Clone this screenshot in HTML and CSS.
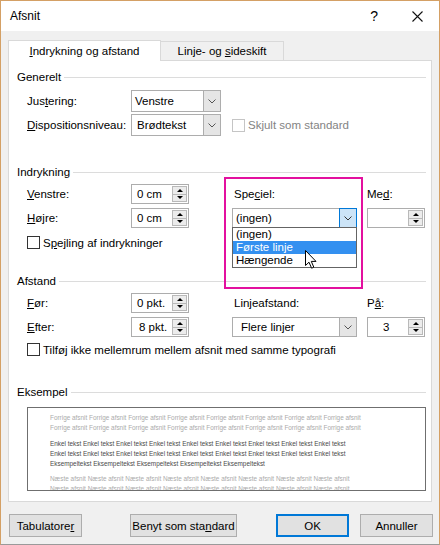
FILE: index.html
```html
<!DOCTYPE html>
<html lang="da">
<head>
<meta charset="UTF-8" />
<meta name="viewport" content="width=device-width, initial-scale=1" />
<title>Afsnit</title>
<link rel="stylesheet" href="styles.css">
</head>
<body>
  <div class="dialog">
    <div class="titlebar">
      <span class="title">Afsnit</span>
      <span class="help">?</span>
      <svg class="close" width="11" height="11" viewBox="0 0 11 11"><path d="M0.5 0.5 L10.5 10.5 M10.5 0.5 L0.5 10.5" stroke="#111" stroke-width="1.1" fill="none"/></svg>
    </div>

    <div class="tabs">
      <div class="tab active"><span><u>I</u>ndrykning og afstand</span></div>
      <div class="tab"><span>Linje- og <u>s</u>ideskift</span></div>
    </div>

    <div class="panel">
      <!-- Generelt -->
      <div class="group-title first">Generelt</div>
      <div class="grid general">
        <label>Jus<u>t</u>ering:</label>
        <div class="select wide"><span class="val">Venstre</span><span class="arrow"><svg width="8" height="5" viewBox="0 0 8 5"><path d="M0.5 0.5 L4 4 L7.5 0.5" stroke="#555" fill="none"/></svg></span></div>
        <div></div><div></div>
        <label><u>D</u>ispositionsniveau:</label>
        <div class="select wide"><span class="val pad5">Brødtekst</span><span class="arrow"><svg width="8" height="5" viewBox="0 0 8 5"><path d="M0.5 0.5 L4 4 L7.5 0.5" stroke="#555" fill="none"/></svg></span></div>
        <div class="check-row span2 disabled"><span class="box"></span><span>Skjult som standard</span></div>
      </div>

      <!-- Indrykning -->
      <div class="group-title gap-indent">Indrykning</div>
      <div class="grid rows indent">
        <label><u>V</u>enstre:</label>
        <div class="spin"><span class="val">0 cm</span><span class="spin-btns"><i class="up"></i><i class="down"></i></span></div>
        <label class="col-label">Spe<u>c</u>iel:</label>
        <label>Me<u>d</u>:</label>

        <label><u>H</u>øjre:</label>
        <div class="spin"><span class="val">0 cm</span><span class="spin-btns"><i class="up"></i><i class="down"></i></span></div>
        <div class="select open">
          <span class="val">(ingen)</span>
          <span class="arrow"><svg width="8" height="5" viewBox="0 0 8 5"><path d="M0.5 0.5 L4 4 L7.5 0.5" stroke="#333" fill="none"/></svg></span>
          <ul class="droplist">
            <li>(ingen)</li>
            <li class="hi">Første linje</li>
            <li>Hængende</li>
          </ul>
          <svg class="cursor" width="12" height="19" viewBox="0 0 12 19"><path d="M0.5 0.5 L0.5 15.5 L4 12.2 L6.6 18.2 L8.8 17.2 L6.3 11.4 L11 11.4 Z" fill="#fff" stroke="#000" stroke-width="1" stroke-linejoin="round"/></svg>
        </div>
        <div class="spin"><span class="val"></span><span class="spin-btns"><i class="up"></i><i class="down"></i></span></div>

        <div class="marker"></div>
      </div>
      <div class="check-row spaced-8"><span class="box"></span><span>S<u>p</u>ejling af indrykninger</span></div>

      <!-- Afstand -->
      <div class="group-title gap-space">Afstand</div>
      <div class="grid rows">
        <label><u>F</u>ør:</label>
        <div class="spin"><span class="val">0 pkt.</span><span class="spin-btns"><i class="up"></i><i class="down"></i></span></div>
        <label class="col-label">Lin<u>j</u>eafstand:</label>
        <label>P<u>å</u>:</label>

        <label><u>E</u>fter:</label>
        <div class="spin"><span class="val pad7">8 pkt.</span><span class="spin-btns"><i class="up"></i><i class="down"></i></span></div>
        <div class="select"><span class="val pad8">Flere linjer</span><span class="arrow"><svg width="8" height="5" viewBox="0 0 8 5"><path d="M0.5 0.5 L4 4 L7.5 0.5" stroke="#555" fill="none"/></svg></span></div>
        <div class="spin"><span class="val pad15">3</span><span class="spin-btns"><i class="up"></i><i class="down"></i></span></div>
      </div>
      <div class="check-row spaced-6"><span class="box"></span><span>Tilføj ikke mellemrum mellem afsnit med samme typografi</span></div>

      <!-- Eksempel -->
      <div class="group-title gap-sample">Eksempel</div>
      <div class="preview">
        <div class="pv prev">Forrige afsnit Forrige afsnit Forrige afsnit Forrige afsnit Forrige afsnit Forrige afsnit Forrige afsnit Forrige afsnit</div>
        <div class="pv prev">Forrige afsnit Forrige afsnit Forrige afsnit Forrige afsnit Forrige afsnit Forrige afsnit Forrige afsnit Forrige afsnit</div>
        <div class="pv cur first-cur">Enkel tekst Enkel tekst Enkel tekst Enkel tekst Enkel tekst Enkel tekst Enkel tekst Enkel tekst Enkel tekst</div>
        <div class="pv cur">Enkel tekst Enkel tekst Enkel tekst Enkel tekst Enkel tekst Enkel tekst Enkel tekst Enkel tekst Enkel tekst</div>
        <div class="pv cur">Eksempeltekst Eksempeltekst Eksempeltekst Eksempeltekst Eksempeltekst</div>
        <div class="pv prev first-next">Næste afsnit Næste afsnit Næste afsnit Næste afsnit Næste afsnit Næste afsnit Næste afsnit Næste afsnit</div>
        <div class="pv prev">Næste afsnit Næste afsnit Næste afsnit Næste afsnit Næste afsnit Næste afsnit Næste afsnit Næste afsnit</div>
      </div>
    </div>

    <div class="buttons">
      <button class="btn tabs-btn">Tabulatore<u>r</u></button>
      <button class="btn default-btn">Benyt som sta<u>n</u>dard</button>
      <button class="btn ok-btn">OK</button>
      <button class="btn cancel-btn">Annuller</button>
    </div>
  </div>
</body>
</html>
```

FILE: styles.css
```css
* {
  box-sizing: border-box;
}
body {
  margin: 0;
  font-family: "Liberation Sans", Arial, sans-serif;
  font-size: 11.5px;
  color: #000;
}
u {
  text-decoration: underline;
  text-underline-offset: 1px;
}
.dialog {
  width: 440px;
  height: 545px;
  border: 1px solid #d4a065;
  border-bottom-color: #9a9a9a;
  background: #f0f0f0;
  display: flex;
  flex-direction: column;
}
.titlebar {
  height: 30px;
  flex: none;
  background: #fff;
  display: flex;
  align-items: center;
  padding-left: 9px;
}
.title {
  flex: 1;
  font-size: 12px;
}
.help {
  font-size: 14px;
  margin-right: 34px;
}
.close {
  margin-right: 16px;
}

/* tabs */
.tabs {
  flex: none;
  display: flex;
  align-items: flex-end;
  height: 21px;
  margin-top: 9px;
  margin-bottom: -1px;
  padding-left: 7px;
  position: relative;
  z-index: 1;
}
.tab {
  width: 123px;
  height: 19px;
  margin-bottom: 1px;
  border: 1px solid #d9d9d9;
  border-left: none;
  border-bottom: none;
  display: flex;
  align-items: center;
  justify-content: center;
}
.tab.active {
  width: 153px;
  height: 21px;
  margin-bottom: 0;
  background: #fff;
  border-left: 1px solid #d9d9d9;
}

/* tab page */
.panel {
  flex: none;
  height: 442px;
  margin: 0 7px;
  background: #fff;
  border: 1px solid #d9d9d9;
}
.group-title {
  display: flex;
  align-items: center;
  height: 16px;
  padding-left: 8px;
  margin-right: 5px;
}
.group-title::after {
  content: "";
  flex: 1;
  height: 1px;
  margin-left: 3px;
  background: #dcdcdc;
}
.group-title.first { margin-top: 8px; }
.group-title.gap-indent { margin-top: 28px; }
.group-title.gap-space { margin-top: 24px; }
.group-title.gap-sample { margin-top: 28px; }

.grid {
  display: grid;
  grid-template-columns: 104px 101px 135px 58px;
  align-items: center;
  padding-left: 18px;
  margin-top: 4px;
  position: relative;
}
.grid.general {
  grid-auto-rows: 22px;
  row-gap: 2px;
  margin-top: 5px;
}
.grid.rows {
  grid-auto-rows: 20px;
  row-gap: 4px;
}
.col-label {
  padding-left: 2px;
}
.span2 {
  grid-column: span 2;
}

/* combo boxes */
.select {
  display: flex;
  width: 125px;
  height: 100%;
  border: 1px solid #adadad;
  background: #fff;
  position: relative;
}
.select.wide {
  width: 90px;
}
.val {
  flex: 1;
  display: flex;
  align-items: center;
  padding-left: 3px;
}
.spin .val {
  padding-left: 5px;
}
.select .val.pad5,
.spin .val.pad5 { padding-left: 5px; }
.spin .val.pad7 { padding-left: 7px; }
.select .val.pad8 { padding-left: 8px; }
.spin .val.pad15 { padding-left: 15px; }
.select .arrow {
  width: 17px;
  display: flex;
  align-items: center;
  justify-content: center;
  background: #e5e5e5;
  border-left: 1px solid #adadad;
}
.select.open .arrow {
  background: #cce4f7;
  border: 1px solid #0078d7;
  margin: -1px -1px -1px 0;
  width: 18px;
}
.droplist {
  position: absolute;
  top: 100%;
  left: -1px;
  width: 125px;
  margin: 0;
  padding: 0;
  list-style: none;
  background: #fff;
  border: 1px solid #646464;
  z-index: 2;
}
.droplist li {
  height: 13px;
  line-height: 13px;
  padding-left: 3px;
}
.droplist li.hi {
  background: #3390f0;
  color: #fff;
}
.cursor {
  position: absolute;
  left: 72px;
  top: 41px;
  z-index: 3;
}

/* spin boxes */
.spin {
  display: flex;
  width: 58px;
  height: 100%;
  border: 1px solid #adadad;
  background: #fff;
}
.spin-btns {
  width: 15px;
  margin: 1px 1px 1px 0;
  display: flex;
  flex-direction: column;
  border: 1px solid #b9b9b9;
  background: #ececec;
}
.spin-btns i {
  flex: 1;
  display: flex;
  align-items: center;
  justify-content: center;
}
.spin-btns i + i {
  border-top: 1px solid #b9b9b9;
}
.spin-btns i::before {
  content: "";
  border-left: 3px solid transparent;
  border-right: 3px solid transparent;
}
.spin-btns .up::before {
  border-bottom: 3px solid #000;
}
.spin-btns .down::before {
  border-top: 3px solid #000;
}

/* highlight frame around Speciel */
.marker {
  position: absolute;
  left: 215px;
  top: -7px;
  width: 139px;
  height: 112px;
  border: 2px solid #e3109f;
  pointer-events: none;
}

/* check boxes */
.check-row {
  display: flex;
  align-items: center;
  height: 13px;
  padding-left: 18px;
}
.grid .check-row {
  padding-left: 0;
}
.check-row .box {
  width: 13px;
  height: 13px;
  border: 1px solid #333;
  background: #fff;
  margin-right: 3px;
}
.check-row.disabled {
  color: #838383;
}
.check-row.disabled .box {
  border-color: #c5c5c5;
}
.spaced-8 { margin-top: 8px; }
.spaced-6 { margin-top: 6px; }

/* sample */
.preview {
  width: 399px;
  height: 84px;
  margin: 7px 0 0 18px;
  border: 1px solid #6f6f6f;
  padding: 5px 0 0 22px;
  overflow: hidden;
}
.pv {
  white-space: nowrap;
  font-size: 6.4px;
  line-height: 10px;
}
.pv.prev { color: #ababab; }
.pv.cur { color: #4a4a4a; }
.pv.first-cur { margin-top: 6px; }
.pv.first-next { margin-top: 5px; }

/* bottom buttons */
.buttons {
  display: flex;
  margin-top: 12px;
  padding-left: 8px;
}
.btn {
  height: 23px;
  width: 73px;
  padding: 0;
  font: inherit;
  color: #000;
  background: #e1e1e1;
  border: 1px solid #adadad;
}
.default-btn {
  width: 107px;
  margin-left: 48px;
}
.ok-btn {
  margin-left: 39px;
  border: 2px solid #0078d7;
}
.cancel-btn {
  margin-left: 11px;
}
```
